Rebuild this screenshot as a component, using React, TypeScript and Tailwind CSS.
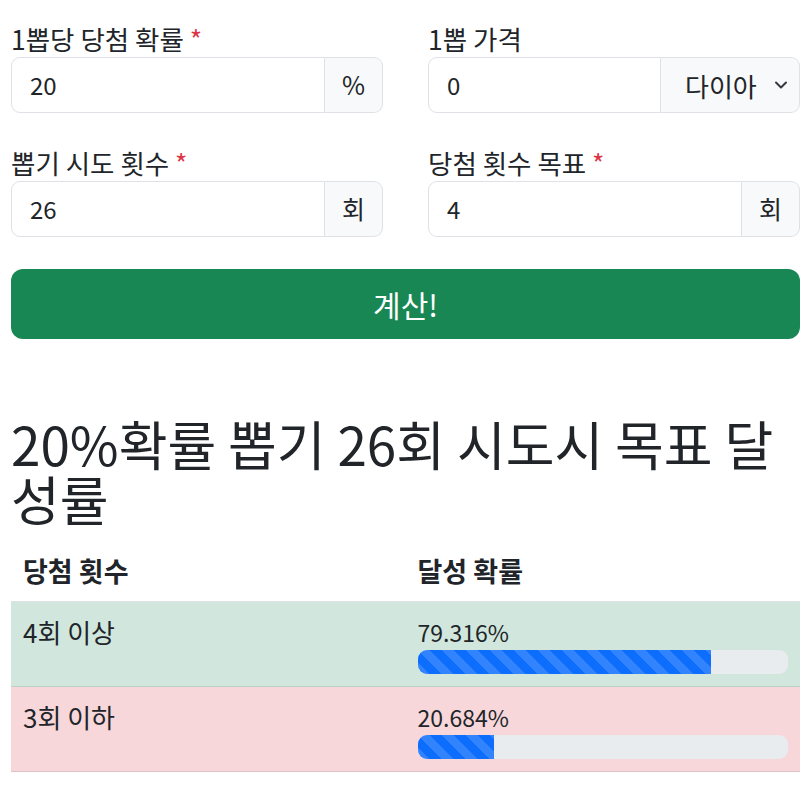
import React from 'react'

const font = "font-['Noto_Sans_CJK_KR','Noto_Sans',sans-serif]"

interface FieldProps {
  label: string
  required?: boolean
  value: string
  addon?: string
  select?: string
}

function Field({ label, required = false, value, addon, select }: FieldProps) {
  return (
    <div>
      <label className="block h-[36px] text-[26.5px] leading-[36px]">
        {label}
        {required && <span className="text-[#dc3545]"> *</span>}
      </label>
      <div className="flex h-[56px]">
        <input
          readOnly
          value={value}
          className={`${font} min-w-0 flex-1 rounded-l-[9px] border border-[#dee2e6] bg-white px-[18px] text-[24px] text-[#212529] outline-none`}
        />
        {addon && (
          <span className="flex items-center rounded-r-[9px] border border-l-0 border-[#dee2e6] bg-[#f8f9fa] px-[17px] text-[25px]">
            {addon}
          </span>
        )}
        {select && (
          <div className="relative w-[139px] shrink-0">
            <select
              defaultValue={select}
              className={`${font} h-full w-full appearance-none rounded-r-[9px] border border-l-0 border-[#dee2e6] bg-[#f8f9fa] pl-[24px] text-[26px] text-[#212529] outline-none`}
            >
              <option>{select}</option>
            </select>
            <svg
              className="pointer-events-none absolute right-[12px] top-1/2 h-[9px] w-[14px] -translate-y-1/2"
              viewBox="0 0 14 9"
              fill="none"
              stroke="#343a40"
              strokeWidth="2"
              strokeLinecap="round"
              strokeLinejoin="round"
            >
              <path d="M2 2l5 5 5-5" />
            </svg>
          </div>
        )}
      </div>
    </div>
  )
}

function Progress({ percent }: { percent: number }) {
  return (
    <div className="h-[24px] w-full overflow-hidden rounded-[9px] bg-[#e9ecef]">
      <div
        className="h-full bg-[#0d6efd] bg-[linear-gradient(45deg,rgba(255,255,255,.15)_25%,transparent_25%,transparent_50%,rgba(255,255,255,.15)_50%,rgba(255,255,255,.15)_75%,transparent_75%,transparent)] bg-[length:24px_24px]"
        style={{ width: `${percent}%` }}
      />
    </div>
  )
}

const rows = [
  { label: '4회 이상', value: 79.316, bg: 'bg-[#d1e7dd]', border: 'border-[#bcd0c7]' },
  { label: '3회 이하', value: 20.684, bg: 'bg-[#f8d7da]', border: 'border-[#dfc2c4]' },
]

export default function App() {
  return (
    <div className={`${font} min-h-screen bg-white pl-[11px] pr-[12px] pt-[21px] text-[#212529]`}>
      <div className="grid grid-cols-2 gap-x-[45px] gap-y-[32px]">
        <Field label="1뽑당 당첨 확률" required value="20" addon="%" />
        <Field label="1뽑 가격" value="0" select="다이아" />
        <Field label="뽑기 시도 횟수" required value="26" addon="회" />
        <Field label="당첨 횟수 목표" required value="4" addon="회" />
      </div>

      <button className="mt-[32px] h-[70px] w-full rounded-[12px] bg-[#198754] text-[30px] text-white">
        계산!
      </button>

      <h2 className="mt-[77px] text-[53px] font-normal leading-[55px]">
        20%확률 뽑기 26회 시도시 목표 달성률
      </h2>

      <table className="mt-[15px] w-full table-fixed border-collapse text-[24px] leading-[36px]">
        <thead>
          <tr className="border-b border-[#dee2e6]">
            <th className="p-[12px] text-left text-[27px] font-bold">당첨 횟수</th>
            <th className="p-[12px] text-left text-[27px] font-bold">달성 확률</th>
          </tr>
        </thead>
        <tbody>
          {rows.map((r) => (
            <tr key={r.label} className={`${r.bg} border-b ${r.border}`}>
              <td className="p-[12px] align-top text-[26px]">{r.label}</td>
              <td className="p-[12px] align-top">
                <div className="text-[23px]">{r.value}%</div>
                <Progress percent={r.value} />
              </td>
            </tr>
          ))}
        </tbody>
      </table>
    </div>
  )
}
